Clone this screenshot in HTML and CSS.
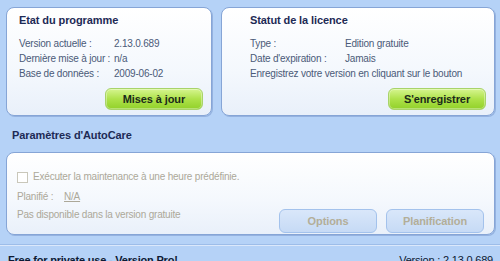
FILE: index.html
```html
<!DOCTYPE html>
<html>
<head>
    <meta charset="UTF-8">
    <link rel="stylesheet" href="styles.css">
</head>
<body>
    <div class="top-row">
        <div class="panel panel-state">
            <div class="panel-title">Etat du programme</div>
            <div class="info-grid info-state">
                <span>Version actuelle :</span><span>2.13.0.689</span>
                <span>Dernière mise à jour :</span><span>n/a</span>
                <span>Base de données :</span><span>2009-06-02</span>
            </div>
            <div class="button-row">
                <button class="green-button">Mises à jour</button>
            </div>
        </div>
        <div class="panel panel-licence">
            <div class="panel-title">Statut de la licence</div>
            <div class="info-grid info-licence">
                <span>Type :</span><span>Edition gratuite</span>
                <span>Date d'expiration :</span><span>Jamais</span>
            </div>
            <div class="register-text">Enregistrez votre version en cliquant sur le bouton</div>
            <div class="button-row">
                <button class="green-button">S'enregistrer</button>
            </div>
        </div>
    </div>

    <div class="section-title">Paramètres d'AutoCare</div>

    <div class="panel panel-autocare">
        <label class="check-row">
            <span class="checkbox"></span>
            <span>Exécuter la maintenance à une heure prédéfinie.</span>
        </label>
        <div class="planned-row">
            <span class="planned-label">Planifié :</span>
            <span class="planned-link">N/A</span>
        </div>
        <div class="bottom-row">
            <span class="unavailable">Pas disponible dans la version gratuite</span>
            <div class="disabled-buttons">
                <button class="blue-button">Options</button>
                <button class="blue-button">Planification</button>
            </div>
        </div>
    </div>

    <div class="footer">
        <span class="footer-left">Free for private use - Version Pro!</span>
        <span class="footer-right">Version : 2.13.0.689</span>
    </div>
</body>
</html>
```

FILE: styles.css
```css
body {
    margin: 0;
    width: 500px;
    height: 261px;
    overflow: hidden;
    background-color: #b5d2f7;
    font-family: 'Liberation Sans', Arial, sans-serif;
    font-size: 10px;
    letter-spacing: -0.2px;
    color: #4b5a78;
    white-space: nowrap;
}

.top-row {
    display: flex;
    gap: 9px;
    padding: 7px 5px 0 6px;
}

.panel {
    box-sizing: border-box;
    background: linear-gradient(to bottom, #ffffff 0%, #f4f8fd 60%, #e9f0fa 100%);
    border: 1px solid #86a5d6;
    border-radius: 8px;
    box-shadow: 1px 1px 0 rgba(90, 120, 180, 0.35);
}

.panel-state {
    width: 206px;
    height: 109px;
    padding: 6px 8px 0 12px;
}

.panel-licence {
    width: 274px;
    height: 109px;
    padding: 6px 8px 0 28px;
}

.panel-title {
    font-weight: bold;
    color: #1d2a55;
    font-size: 11px;
    letter-spacing: -0.1px;
    height: 14px;
    margin-bottom: 9px;
}

.info-grid {
    display: grid;
    row-gap: 2px;
    line-height: 13px;
}

.info-state {
    grid-template-columns: 95px auto;
}

.info-licence {
    grid-template-columns: 95px auto;
}

.register-text {
    margin-top: 2px;
    line-height: 13px;
}

.button-row {
    display: flex;
    justify-content: flex-end;
    margin-top: 8px;
}

.green-button {
    width: 98px;
    height: 22px;
    border: 1px solid #a8d36a;
    border-radius: 6px;
    background: linear-gradient(to bottom, #d6f590 0%, #aee24a 50%, #92d12a 100%);
    box-shadow: inset 0 0 0 1px rgba(255, 255, 255, 0.35);
    font-family: inherit;
    font-size: 11px;
    letter-spacing: -0.1px;
    font-weight: bold;
    color: #1b2a1a;
    padding: 0;
}

.section-title {
    font-weight: bold;
    color: #1d2a55;
    font-size: 11px;
    letter-spacing: -0.1px;
    padding: 13px 0 0 12px;
    height: 14px;
    margin-bottom: 9px;
}

.panel-autocare {
    margin-left: 6px;
    width: 489px;
    height: 83px;
    padding: 18px 10px 0 10px;
    color: #aca899;
    line-height: 12px;
}

.check-row {
    display: flex;
    align-items: center;
    gap: 5px;
}

.checkbox {
    box-sizing: border-box;
    width: 11px;
    height: 11px;
    border: 1px solid #c9c7ba;
    background: #ffffff;
}

.planned-row {
    display: flex;
    margin-top: 8px;
}

.planned-label {
    width: 47px;
}

.planned-link {
    text-decoration: underline;
}

.bottom-row {
    display: flex;
    justify-content: space-between;
    align-items: flex-start;
    margin-top: 6px;
}

.disabled-buttons {
    display: flex;
    gap: 9px;
}

.blue-button {
    width: 98px;
    height: 24px;
    border: 1px solid #a3c2ec;
    border-radius: 6px;
    background: linear-gradient(to bottom, #d9e7fa 0%, #c6daf5 100%);
    font-family: inherit;
    font-size: 11px;
    letter-spacing: -0.1px;
    font-weight: bold;
    color: #b3ae98;
    padding: 0;
}

.footer {
    margin-top: 10px;
    border-top: 1px solid #dbe8fb;
    box-shadow: 0 -1px 0 #9dbde9;
    display: flex;
    justify-content: space-between;
    padding: 8px 7px 0 8px;
    color: #0e1a33;
    font-size: 11px;
}

.footer-left {
    font-weight: bold;
}
```
